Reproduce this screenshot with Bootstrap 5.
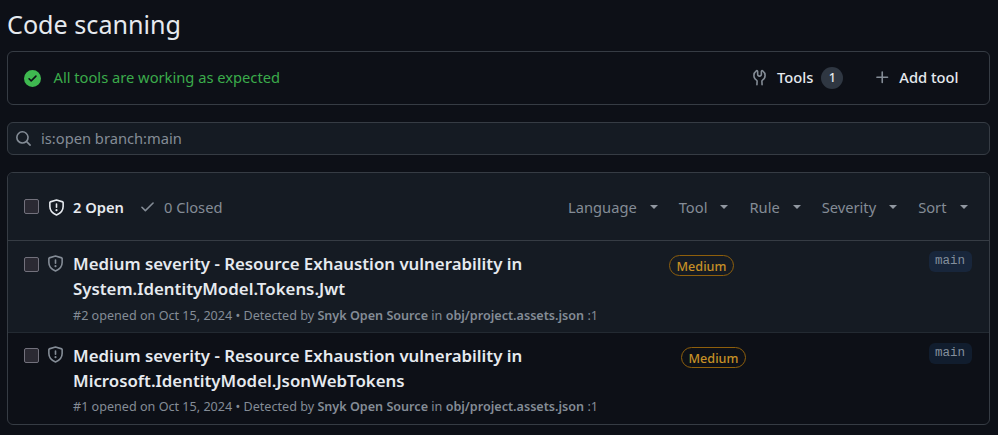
<!DOCTYPE html>
<html lang="en" data-bs-theme="dark">
<head>
<meta charset="utf-8">
<meta name="viewport" content="width=device-width, initial-scale=1">
<title>Code scanning</title>
<link href="https://cdn.jsdelivr.net/npm/bootstrap@5.3.0/dist/css/bootstrap.min.css" rel="stylesheet">
<style>
:root{--line:#363c44;--muted:#848c96;--panel:#151b23;--fg:#e6eaef}
body{background:#0d1017;color:var(--fg);font-family:"Noto Sans",sans-serif;font-size:14.7px;line-height:22px;overflow:hidden}
svg{display:block;flex:none;fill:currentColor}
.page{padding:6px 8.5px 0 7px}
.page-title{font-size:25.15px;line-height:36px;font-weight:400;margin:0 0 9px;color:var(--fg)}
.panel{border:1px solid var(--line);border-radius:6px}
.status{height:54px;padding:0 30px 2px 16px;margin-bottom:17px}
.ok{color:#3fb950;margin-top:3px}
.ok-text{color:#3bab4b;margin-left:12.5px}
.muted{color:var(--muted)}
.count{width:22px;height:22px;background:#2f3742;font-size:12.6px;margin-top:1px}
.tools-icon{margin-right:9px}
.add-icon{margin-left:31px}
.filter-input{height:33px;background:var(--panel);margin-bottom:17px;padding:0 7px 1px}
.filter-input span{margin-left:9px}
.list-top{height:68px;background:var(--panel);border-bottom:1px solid var(--line);padding:0 21px 0 16px}
.list-top .state-icon{margin:1px 0 0 9px}
.closed-icon{margin-left:15px}
.menus{gap:21px}
.tick{appearance:none;width:15px;height:15px;margin:0;background:#2b2a33;border:1px solid #72717c;border-radius:2px;flex:none}
.menu-btn{padding:0;border:0;background:none;color:var(--muted);font-size:14.7px;line-height:22px;display:flex;align-items:center}
.menu-btn::after{content:"";margin:1px 0 0 13px;border:4px solid transparent;border-top:4.5px solid #9198a1;border-bottom:0}
.alert-row{height:92px;padding:10px 17px 0 16px}
.alert-row.first{background:var(--panel);border-bottom:1px solid #232a32}
.alert-row.second{height:91px}
.alert-row .tick{margin-top:6px}
.alert-row .state-icon{margin:4px 0 0 8px}
.second .tick{margin-top:5px}
.second .state-icon{margin-top:3px}
.alert-text{margin-left:9px}
.alert-name{font-size:16.83px;line-height:25.4px;font-weight:600;margin:0;width:490px;color:var(--fg)}
.meta{font-size:12.6px;line-height:19px;margin-top:4px;white-space:nowrap}
.second .meta{margin-top:3.5px}
.sev{font-size:12.6px;line-height:21px;height:21px;width:65px;font-weight:500;color:#c69026;border:1px solid #8e5f0c;border-radius:11px;text-align:center;margin:4px 0 0 71px}
.second .sev{margin-left:83px}
.branch{font:12.5px/21px "Liberation Mono",monospace;height:21px;width:43px;background:#18263b;color:#848f9c;border-radius:6px;text-align:center}
.second .branch{background:#111d2e}
</style>
</head>
<body>
<svg width="0" height="0" class="position-absolute" aria-hidden="true">
<symbol id="shield" viewBox="0 0 16 16"><path d="M8 .95 13.9 2.7Q14.25 2.85 14.25 3.2V7C14.25 10.6 12 13.4 8 15 4 13.4 1.75 10.6 1.75 7V3.2Q1.75 2.85 2.1 2.7Z" fill="none" stroke="currentColor" stroke-width="1.5" stroke-linejoin="round"/><path d="M8 4.7v3" fill="none" stroke="currentColor" stroke-width="1.5" stroke-linecap="round"/><circle cx="8" cy="10.5" r="1"/></symbol>
</svg>
<main class="page">
<h1 class="page-title">Code scanning</h1>
<section class="panel status d-flex align-items-center">
<svg class="ok" width="17" height="17" viewBox="0 0 16 16"><path d="M8 16A8 8 0 1 1 8 0a8 8 0 0 1 0 16Zm3.78-9.72a.751.751 0 0 0-.018-1.042.751.751 0 0 0-1.042-.018L6.75 9.19 5.28 7.72a.751.751 0 0 0-1.042.018.751.751 0 0 0-.018 1.042l2 2a.75.75 0 0 0 1.06 0Z"/></svg>
<span class="ok-text">All tools are working as expected</span>
<div class="d-flex align-items-center ms-auto fw-medium">
<svg class="muted tools-icon" width="17" height="17" viewBox="0 0 16 16"><path d="M5.433 2.304A4.492 4.492 0 0 0 3.5 6c0 1.598.832 3.002 2.09 3.802.518.328.929.923.902 1.64v.008l-.164 3.337a.75.75 0 1 1-1.498-.073l.163-3.33c.002-.085-.05-.216-.207-.316A5.996 5.996 0 0 1 2 6a5.993 5.993 0 0 1 2.567-4.92 1.482 1.482 0 0 1 1.673-.04c.462.296.76.827.76 1.423v2.82c0 .082.041.16.11.206l.75.51a.25.25 0 0 0 .28 0l.75-.51A.249.249 0 0 0 9 5.282V2.463c0-.596.298-1.127.76-1.423a1.482 1.482 0 0 1 1.673.04A5.993 5.993 0 0 1 14 6a5.996 5.996 0 0 1-2.786 5.068c-.157.1-.209.23-.207.315l.163 3.33a.752.752 0 0 1-1.498.074l-.164-3.345c-.027-.717.384-1.312.902-1.64A4.495 4.495 0 0 0 12.5 6a4.492 4.492 0 0 0-1.933-3.696c-.024.017-.067.067-.067.159v2.82a1.75 1.75 0 0 1-.767 1.448l-.75.51a1.75 1.75 0 0 1-1.966 0l-.75-.51A1.75 1.75 0 0 1 5.5 5.283v-2.82c0-.092-.043-.142-.067-.159Z"/></svg>
<span>Tools</span>
<span class="count rounded-circle text-center ms-2">1</span>
<svg class="muted add-icon" width="17" height="17" viewBox="0 0 16 16"><path d="M7.75 2a.75.75 0 0 1 .75.75V7h4.25a.75.75 0 0 1 0 1.5H8.5v4.25a.75.75 0 0 1-1.5 0V8.5H2.75a.75.75 0 0 1 0-1.5H7V2.75A.75.75 0 0 1 7.75 2Z"/></svg>
<span class="ms-2">Add tool</span>
</div>
</section>
<div class="panel filter-input muted d-flex align-items-center">
<svg width="17" height="17" viewBox="0 0 16 16"><path d="M10.68 11.74a6 6 0 0 1-7.922-8.982 6 6 0 0 1 8.982 7.922l3.04 3.04a.749.749 0 0 1-.326 1.275.749.749 0 0 1-.734-.215ZM11.5 7a4.499 4.499 0 1 0-8.997 0A4.499 4.499 0 0 0 11.5 7Z"/></svg>
<span>is:open branch:main</span>
</div>
<section class="panel overflow-hidden">
<header class="list-top d-flex align-items-center">
<input class="tick" type="checkbox" aria-label="Select all">
<svg class="state-icon" width="17" height="17"><use href="#shield"/></svg>
<span class="fw-semibold ms-2">2 Open</span>
<svg class="muted closed-icon" width="17" height="17" viewBox="0 0 16 16"><path d="M13.78 4.22a.75.75 0 0 1 0 1.06l-7.25 7.25a.75.75 0 0 1-1.06 0L2.22 9.28a.751.751 0 0 1 .018-1.042.751.751 0 0 1 1.042-.018L6 10.94l6.72-6.72a.75.75 0 0 1 1.06 0Z"/></svg>
<span class="muted ms-2">0 Closed</span>
<nav class="menus d-flex ms-auto">
<button class="menu-btn">Language</button><button class="menu-btn">Tool</button><button class="menu-btn">Rule</button><button class="menu-btn">Severity</button><button class="menu-btn">Sort</button>
</nav>
</header>
<article class="alert-row first d-flex align-items-start">
<input class="tick" type="checkbox" aria-label="Select alert 2">
<svg class="muted state-icon" width="17" height="17"><use href="#shield"/></svg>
<div class="alert-text"><h2 class="alert-name">Medium severity - Resource Exhaustion vulnerability in System.IdentityModel.Tokens.Jwt</h2>
<div class="meta muted">#2 opened on Oct 15, 2024 • Detected by <b class="fw-semibold">Snyk Open Source</b> in <b class="fw-semibold">obj/project.assets.json</b> :1</div></div>
<span class="sev">Medium</span><span class="branch ms-auto">main</span>
</article>
<article class="alert-row second d-flex align-items-start">
<input class="tick" type="checkbox" aria-label="Select alert 1">
<svg class="muted state-icon" width="17" height="17"><use href="#shield"/></svg>
<div class="alert-text"><h2 class="alert-name">Medium severity - Resource Exhaustion vulnerability in Microsoft.IdentityModel.JsonWebTokens</h2>
<div class="meta muted">#1 opened on Oct 15, 2024 • Detected by <b class="fw-semibold">Snyk Open Source</b> in <b class="fw-semibold">obj/project.assets.json</b> :1</div></div>
<span class="sev">Medium</span><span class="branch ms-auto">main</span>
</article>
</section>
</main>
<script src="https://cdn.jsdelivr.net/npm/bootstrap@5.3.0/dist/js/bootstrap.bundle.min.js"></script>
</body>
</html>
